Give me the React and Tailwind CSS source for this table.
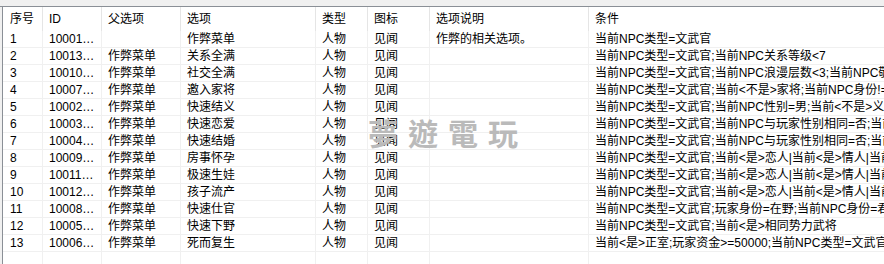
import React from "react";

const cond8 = "当前NPC类型=文武官;当前<是>恋人|当前<是>情人|当前<是>配偶";
const rows = [
  ["1", "10001…", "", "作弊菜单", "人物", "见闻", "作弊的相关选项。", "当前NPC类型=文武官"],
  ["2", "10013…", "作弊菜单", "关系全满", "人物", "见闻", "", "当前NPC类型=文武官;当前NPC关系等级<7"],
  ["3", "10010…", "作弊菜单", "社交全满", "人物", "见闻", "", "当前NPC类型=文武官;当前NPC浪漫层数<3;当前NPC敬畏层数<3"],
  ["4", "10007…", "作弊菜单", "邀入家将", "人物", "见闻", "", "当前NPC类型=文武官;当前<不是>家将;当前NPC身份!=君主"],
  ["5", "10002…", "作弊菜单", "快速结义", "人物", "见闻", "", "当前NPC类型=文武官;当前NPC性别=男;当前<不是>义兄弟"],
  ["6", "10003…", "作弊菜单", "快速恋爱", "人物", "见闻", "", "当前NPC类型=文武官;当前NPC与玩家性别相同=否;当前<不是>恋人"],
  ["7", "10004…", "作弊菜单", "快速结婚", "人物", "见闻", "", "当前NPC类型=文武官;当前NPC与玩家性别相同=否;当前<不是>配偶"],
  ["8", "10009…", "作弊菜单", "房事怀孕", "人物", "见闻", "", cond8],
  ["9", "10011…", "作弊菜单", "极速生娃", "人物", "见闻", "", cond8],
  ["10", "10012…", "作弊菜单", "孩子流产", "人物", "见闻", "", cond8],
  ["11", "10008…", "作弊菜单", "快速仕官", "人物", "见闻", "", "当前NPC类型=文武官;玩家身份=在野;当前NPC身份=君主"],
  ["12", "10005…", "作弊菜单", "快速下野", "人物", "见闻", "", "当前NPC类型=文武官;当前<是>相同势力武将"],
  ["13", "10006…", "作弊菜单", "死而复生", "人物", "见闻", "", "当前<是>正室;玩家资金>=50000;当前NPC类型=文武官"],
];

const headers = ["序号", "ID", "父选项", "选项", "类型", "图标", "选项说明", "条件"];
const grid = "grid grid-cols-[40px_59px_79px_135px_52px_62px_159px_1fr]";

export default function App() {
  return (
    <div
      className="relative w-[884px] h-[264px] overflow-hidden bg-white text-[12px] text-black flex flex-col"
      style={{ fontFamily: '"Liberation Sans", "Noto Sans CJK SC", sans-serif' }}
    >
      <div className="h-[6px] bg-[#f0f0f0] border-b border-[#8a8f96] box-content shrink-0" />
      <div className="flex flex-1 min-h-0">
        <div className="w-[2px] bg-[#f0f0f0] shrink-0" />
        <div className="w-px bg-[#8a8f96] shrink-0" />
        <div className="flex-1 flex flex-col min-w-0">
          <div className={`${grid} h-[24px] shrink-0`}>
            {headers.map((h, i) => (
              <div
                key={i}
                className={`flex items-center whitespace-nowrap overflow-hidden ${i === 0 ? "pl-[7px]" : "pl-[6px]"} ${i < 7 ? "border-r border-[#e5e5e5]" : ""}`}
              >
                {h}
              </div>
            ))}
          </div>
          {rows.map((r, ri) => (
            <div key={ri} className={`${grid} h-[17px] shrink-0 border-b border-[#f0f0f0]`}>
              {r.map((c, i) => (
                <div
                  key={i}
                  className={`flex items-center whitespace-nowrap overflow-hidden leading-[16px] ${i === 0 ? "pl-[7px]" : "pl-[6px]"} ${i < 7 ? "border-r border-[#f0f0f0]" : ""}`}
                >
                  {c}
                </div>
              ))}
            </div>
          ))}
          <div className={`${grid} flex-1`}>
            {headers.map((h, i) => (
              <div key={i} className={i < 7 ? "border-r border-[#f0f0f0]" : ""} />
            ))}
          </div>
        </div>
      </div>
      <div
        className="absolute left-[368px] top-[116px] text-[30px] leading-[32px] font-bold text-[#bababa] tracking-[10px] whitespace-nowrap pointer-events-none"
        style={{ fontFamily: '"Noto Sans CJK TC", "Noto Sans CJK SC", sans-serif' }}
      >
        夢遊電玩
      </div>
    </div>
  );
}
